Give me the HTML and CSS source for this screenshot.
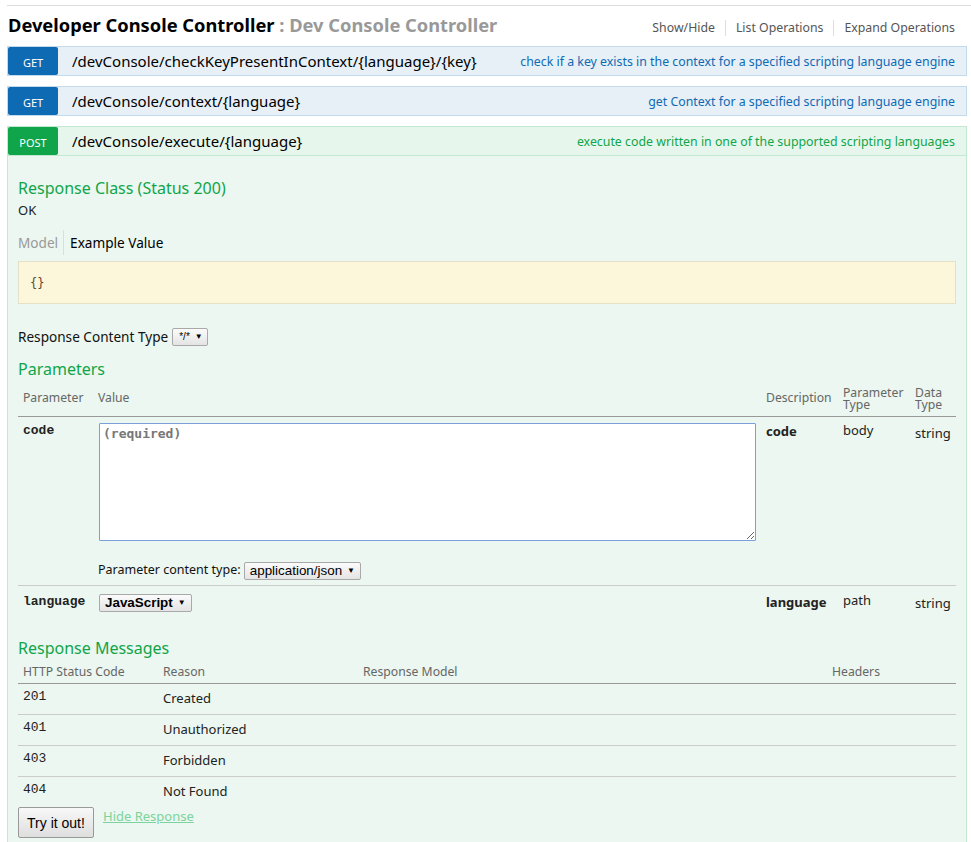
FILE: index.html
```html
<!DOCTYPE html>
<html>
<head>
<meta charset="utf-8">
<title>Developer Console Controller</title>
<link rel="stylesheet" href="styles.css">
</head>
<body>
<div class="top-rule"></div>
<div class="resource">
  <div class="res-head">
    <h2 class="res-title">Developer Console Controller<span class="res-sub"> : Dev Console Controller</span></h2>
    <ul class="res-links">
      <li>Show/Hide</li>
      <li>List Operations</li>
      <li>Expand Operations</li>
    </ul>
  </div>
  <ul class="ops">
    <li class="op get">
      <div class="op-head">
        <span class="verb">GET</span>
        <span class="path">/devConsole/checkKeyPresentInContext/{language}/{key}</span>
        <span class="summary">check if a key exists in the context for a specified scripting language engine</span>
      </div>
    </li>
    <li class="op get">
      <div class="op-head">
        <span class="verb">GET</span>
        <span class="path">/devConsole/context/{language}</span>
        <span class="summary">get Context for a specified scripting language engine</span>
      </div>
    </li>
    <li class="op post">
      <div class="op-head">
        <span class="verb">POST</span>
        <span class="path">/devConsole/execute/{language}</span>
        <span class="summary">execute code written in one of the supported scripting languages</span>
      </div>
      <div class="op-content">
        <h4 class="sec-title first">Response Class (Status 200)</h4>
        <p class="ok">OK</p>
        <div class="tabs">
          <span class="tab muted">Model</span>
          <span class="tab active">Example Value</span>
        </div>
        <div class="snippet"><code>{}</code></div>
        <div class="content-type">
          <span>Response Content Type</span>
          <span class="select tiny">*/*<span class="arrow">▼</span></span>
        </div>
        <h4 class="sec-title params">Parameters</h4>
        <table class="tbl ptable">
          <colgroup>
            <col class="c-param"><col class="c-value"><col class="c-desc"><col class="c-ptype"><col class="c-dtype">
          </colgroup>
          <thead>
            <tr>
              <th>Parameter</th>
              <th>Value</th>
              <th class="th-low">Description</th>
              <th class="th-two">Parameter<br>Type</th>
              <th class="th-two">Data<br>Type</th>
            </tr>
          </thead>
          <tbody>
            <tr class="row-code">
              <td class="pname">code</td>
              <td>
                <textarea class="body-input" placeholder="(required)"></textarea>
                <div class="pct">Parameter content type: <span class="select">application/json<span class="arrow">▼</span></span></div>
              </td>
              <td class="desc-b">code</td>
              <td class="ptype">body</td>
              <td class="dtype">string</td>
            </tr>
            <tr class="row-lang">
              <td class="pname">language</td>
              <td><span class="select bold">JavaScript<span class="arrow">▼</span></span></td>
              <td class="desc-b">language</td>
              <td class="ptype">path</td>
              <td class="dtype">string</td>
            </tr>
          </tbody>
        </table>
        <h4 class="sec-title msgs">Response Messages</h4>
        <table class="tbl rtable">
          <colgroup>
            <col class="c-code"><col class="c-reason"><col class="c-model"><col class="c-headers">
          </colgroup>
          <thead>
            <tr><th>HTTP Status Code</th><th>Reason</th><th>Response Model</th><th>Headers</th></tr>
          </thead>
          <tbody>
            <tr><td class="scode">201</td><td>Created</td><td></td><td></td></tr>
            <tr><td class="scode">401</td><td>Unauthorized</td><td></td><td></td></tr>
            <tr><td class="scode">403</td><td>Forbidden</td><td></td><td></td></tr>
            <tr><td class="scode">404</td><td>Not Found</td><td></td><td></td></tr>
          </tbody>
        </table>
        <div class="sandbox">
          <button class="try" type="button">Try it out!</button>
          <a class="hide-resp" href="#">Hide Response</a>
        </div>
      </div>
    </li>
  </ul>
</div>
</body>
</html>
```

FILE: styles.css
```css
html, body {
  margin: 0;
  padding: 0;
  background: #fff;
}
body {
  font-family: "Noto Sans", "Open Sans", sans-serif;
  font-size: 13px;
  color: #222;
}
.top-rule {
  margin: 5px 0 0 7px;
  border-top: 1px solid #ddd;
  height: 0;
}
.resource {
  width: 960px;
  margin-left: 7px;
}
.res-head {
  height: 40px;
  display: flex;
  align-items: center;
  justify-content: space-between;
}
.res-title {
  margin: 0 0 0 1px;
  font-size: 18.3px;
  font-weight: bold;
  line-height: 24px;
  color: #000;
  padding-bottom: 2px;
}
.res-sub {
  color: #999;
}
.res-links {
  list-style: none;
  margin: 4px 12px 0 0;
  padding: 0;
  display: flex;
}
.res-links li {
  padding: 0 10px;
  line-height: 16px;
  font-size: 12.3px;
  color: #555;
  border-left: 1px solid #ddd;
}
.res-links li:first-child {
  border-left: none;
}
.res-links li:last-child {
  padding-right: 0;
}
.ops {
  list-style: none;
  margin: 0;
  padding: 0;
}
.op {
  margin-bottom: 10px;
}
.op-head {
  display: flex;
  align-items: center;
  height: 28px;
  border: 1px solid #c3d9ec;
  background: #e7f0f7;
}
.verb {
  width: 50px;
  height: 28px;
  flex: none;
  display: flex;
  align-items: center;
  justify-content: center;
  padding-top: 3px;
  box-sizing: border-box;
  border-radius: 2px;
  background: #0f6ab4;
  color: #fff;
  font-size: 11px;
}
.path {
  margin-left: 14px;
  font-size: 15px;
  color: #000;
  white-space: nowrap;
}
.summary {
  margin-left: auto;
  padding-right: 11px;
  font-size: 12.35px;
  color: #0f6ab4;
  white-space: nowrap;
}
.post .op-head {
  border-color: #c3e8d1;
  background: #e7f6ec;
}
.post .verb {
  background: #10a54a;
}
.post .summary {
  color: #10a54a;
}
.op-content {
  background: #ebf7f0;
  border: 1px solid #c3e8d1;
  border-top: none;
  padding: 22px 10px 0;
  height: 700px;
}
.sec-title {
  margin: 0;
  font-size: 16px;
  line-height: 20px;
  font-weight: normal;
  color: #10a54a;
}
.ok {
  margin: 3px 0 0;
  line-height: 18px;
  font-size: 13px;
  color: #222;
}
.tabs {
  display: flex;
  margin-top: 11px;
  height: 25px;
  align-items: stretch;
}
.tab {
  font-size: 13.6px;
  display: flex;
  align-items: center;
}
.tab.muted {
  color: #999;
  padding-right: 5px;
  border-right: 1px solid #ddd;
}
.tab.active {
  color: #000;
  padding-left: 6px;
}
.snippet {
  margin-top: 6px;
  background: #fcf6db;
  border: 1px solid #e5e0c6;
  padding: 12px 11px 11px;
  line-height: 17px;
}
.snippet code {
  font-family: "DejaVu Sans Mono", monospace;
  font-size: 12px;
  color: #5b4a35;
}
.content-type {
  margin-top: 24px;
  display: flex;
  align-items: center;
  font-size: 13.6px;
  line-height: 18px;
  color: #111;
}
.content-type .select {
  margin-left: 4px;
}
.select {
  display: inline-flex;
  align-items: center;
  height: 18px;
  box-sizing: border-box;
  padding: 0 5px;
  border: 1px solid #a9a9a9;
  border-radius: 2px;
  background: linear-gradient(#fbfbfb, #e4e4e4);
  font-family: "Liberation Sans", Arial, sans-serif;
  font-size: 13.4px;
  color: #000;
  vertical-align: middle;
}
.select.bold {
  font-weight: bold;
}
.select.tiny {
  font-size: 10px;
  padding: 0 4px 0 6px;
  height: 18px;
}
.arrow {
  font-size: 8px;
  margin-left: 5px;
  font-weight: normal;
}
.sec-title.params {
  margin-top: 13px;
}
.tbl {
  width: 100%;
  border-collapse: collapse;
  table-layout: fixed;
}
.tbl th {
  font-weight: normal;
  text-align: left;
  color: #666;
  font-size: 12.2px;
  border-bottom: 1px solid #999;
  padding: 5px 5px 4px;
  vertical-align: bottom;
  line-height: 14px;
  white-space: nowrap;
}
.ptable {
  margin-top: 3px;
}
.ptable th {
  padding-bottom: 11px;
}
.ptable th.th-two {
  line-height: 12px;
  padding-bottom: 5px;
}
.c-param { width: 75px; }
.c-value { width: 668px; }
.c-desc { width: 77px; }
.c-ptype { width: 72px; }
.c-dtype { width: 46px; }
.ptable td {
  vertical-align: top;
  padding: 6px 5px;
  font-size: 13px;
  line-height: 16px;
  color: #222;
}
.row-code td {
  border-bottom: 1px solid #ccc;
  padding-bottom: 5px;
}
.pname {
  font-family: "Liberation Mono", monospace;
  font-weight: bold;
  font-size: 13px;
  color: #000;
}
.body-input {
  display: block;
  width: 657px;
  height: 118px;
  margin: 0 0 0 1px;
  box-sizing: border-box;
  border: 1px solid #7b9fdb;
  border-radius: 1px;
  background: #fff;
  padding: 2px 3px;
  font-family: "DejaVu Sans Mono", monospace;
  font-size: 13px;
  font-weight: bold;
  resize: vertical;
}
.body-input::placeholder {
  color: #777;
}
.pct {
  margin-top: 20px;
  font-size: 12.5px;
  line-height: 18px;
  color: #111;
}
.desc-b {
  font-weight: bold;
}
.ptable td.ptype {
  padding-top: 5px;
}
.ptable td.dtype {
  padding-top: 8px;
}
.row-lang td {
  padding-top: 7px;
  line-height: 18px;
}
.row-lang .select {
  margin-left: 1px;
}
.row-lang td.ptype {
  padding-top: 5px;
}
.row-lang td.dtype {
  padding-top: 8px;
}
.sec-title.msgs {
  margin-top: 20px;
}
.rtable {
  margin-top: 2px;
}
.c-code { width: 140px; }
.c-reason { width: 200px; }
.c-model { width: 469px; }
.c-headers { width: 129px; }
.rtable td {
  padding: 5px 5px 9px;
  line-height: 16px;
  font-size: 13px;
  color: #222;
  vertical-align: top;
}
.rtable tbody tr + tr td {
  border-top: 1px solid #ccc;
}
.rtable td:nth-child(2) {
  padding-top: 6px;
  padding-bottom: 8px;
}
.scode {
  font-family: "Liberation Mono", monospace;
  font-size: 13px;
  color: #000;
}
.sandbox {
  display: flex;
  align-items: flex-start;
}
.try {
  width: 76px;
  height: 31px;
  margin: 0;
  padding: 0;
  border: 1px solid #999;
  border-radius: 2px;
  background: linear-gradient(#f8f8f8, #dedede);
  font-family: "Liberation Sans", Arial, sans-serif;
  font-size: 14px;
  color: #000;
}
.hide-resp {
  margin: 1px 0 0 9px;
  color: #7dd39c;
  font-size: 13px;
  line-height: 16px;
  text-decoration: underline;
}
```
